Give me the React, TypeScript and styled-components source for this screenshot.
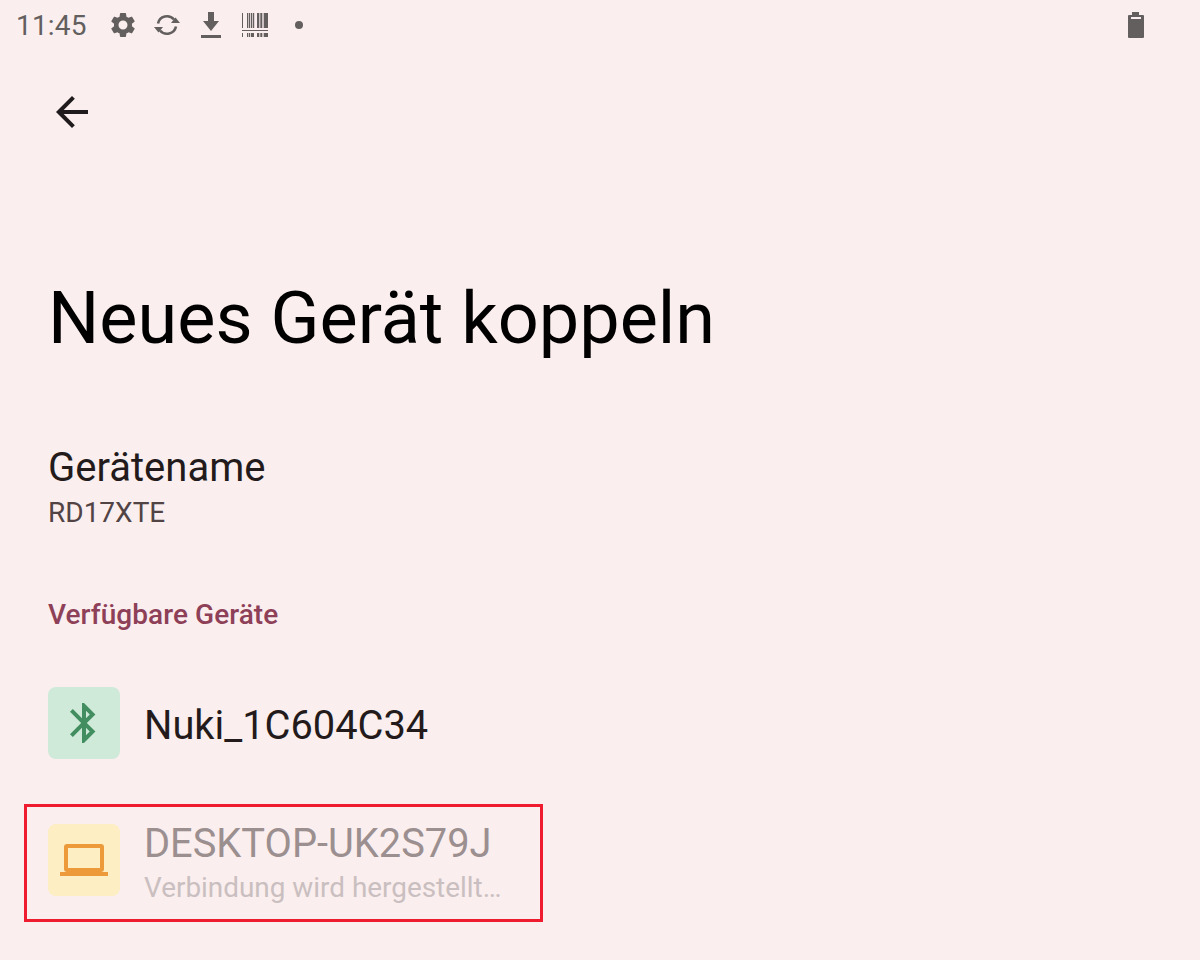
import React from "react";
import styled, { createGlobalStyle } from "styled-components";

const GlobalStyle = createGlobalStyle`
  html, body {
    margin: 0;
    padding: 0;
    background: #faeeee;
  }
  body {
    font-family: Roboto, "Noto Sans", sans-serif;
    overflow: hidden;
  }
`;

const Screen = styled.div`
  position: relative;
  width: 1200px;
  height: 960px;
  background: #faeeee;
  display: flex;
  flex-direction: column;
  overflow: hidden;
`;

const StatusBar = styled.div`
  height: 50px;
  display: flex;
  align-items: center;
  padding: 0 56px 0 16px;
  color: #635f5f;
`;

const Clock = styled.span`
  font-size: 28px;
  letter-spacing: 0.2px;
  width: 85px;
`;

const StatusIcons = styled.div`
  display: flex;
  align-items: center;
  flex: 1;
`;

// every notification icon sits in a slot of the same width
const IconSlot = styled.div`
  width: 44px;
  height: 50px;
  display: flex;
  align-items: center;
  justify-content: center;
`;

const StatusIcon = styled.svg`
  display: block;
  flex: none;
`;

const BackBar = styled.div`
  height: 227px;
  padding: 38px 0 0 48px;
  box-sizing: border-box;
`;

const Title = styled.h1`
  margin: 0;
  padding: 0 48px;
  font-size: 72px;
  line-height: 84px;
  font-weight: 400;
  color: #000;
  height: 96px;
`;

const NameBlock = styled.div`
  padding: 0 48px;
  margin-top: 74px;
`;

const NameLabel = styled.div`
  font-size: 40px;
  line-height: 42px;
  color: #231a1b;
`;

const NameValue = styled.div`
  font-size: 28px;
  line-height: 32px;
  color: #524345;
  margin-top: 8px;
`;

const SectionLabel = styled.div`
  padding: 0 48px;
  margin-top: 70px;
  font-size: 28px;
  letter-spacing: 0.06px;
  line-height: 32px;
  font-weight: 500;
  color: #8d4057;
`;

const DeviceRow = styled.div<{ $top: number }>`
  display: flex;
  align-items: center;
  gap: 24px;
  padding: 0 48px;
  height: 72px;
  margin-top: ${(p) => p.$top}px;
`;

const IconTile = styled.div<{ $bg: string }>`
  width: 72px;
  height: 72px;
  flex: none;
  border-radius: 8px;
  background: ${(p) => p.$bg};
  display: flex;
  align-items: center;
  justify-content: center;
`;

const DeviceText = styled.div`
  display: flex;
  flex-direction: column;
  padding-top: 6px;
`;

const DeviceName = styled.div<{ $muted?: boolean }>`
  font-size: 39.8px;
  line-height: 44px;
  color: ${(p) => (p.$muted ? "#9c8f90" : "#231a1b")};
`;

const DeviceStatus = styled.div`
  font-size: 27.9px;
  line-height: 32px;
  color: #cabfc0;
  margin-top: 6px;
`;

const Highlight = styled.div`
  position: absolute;
  left: 24px;
  top: 804px;
  width: 519px;
  height: 118px;
  box-sizing: border-box;
  border: 3px solid #ee1c2e;
  pointer-events: none;
`;

const Gear = () => (
  <StatusIcon width="30" height="30" viewBox="0 0 24 24" fill="#635f5f">
    <path d="M19.14 12.94c.04-.3.06-.61.06-.94 0-.32-.02-.64-.07-.94l2.03-1.58a.49.49 0 0 0 .12-.61l-1.92-3.32a.49.49 0 0 0-.59-.22l-2.39.96c-.5-.38-1.03-.7-1.62-.94l-.36-2.54a.48.48 0 0 0-.48-.41h-3.84a.48.48 0 0 0-.47.41l-.36 2.54c-.59.24-1.13.57-1.62.94l-2.39-.96a.48.48 0 0 0-.59.22L2.74 8.87a.48.48 0 0 0 .12.61l2.03 1.58c-.05.3-.09.63-.09.94s.02.64.07.94l-2.03 1.58a.49.49 0 0 0-.12.61l1.92 3.32c.12.22.37.29.59.22l2.39-.96c.5.38 1.03.7 1.62.94l.36 2.54c.05.24.24.41.48.41h3.84c.24 0 .44-.17.47-.41l.36-2.54c.59-.24 1.13-.56 1.62-.94l2.39.96c.22.08.47 0 .59-.22l1.92-3.32a.48.48 0 0 0-.12-.61l-2.01-1.58zM12 15.6a3.6 3.6 0 1 1 0-7.2 3.6 3.6 0 0 1 0 7.2z" />
  </StatusIcon>
);

const Sync = () => (
  <StatusIcon width="28" height="26" viewBox="0 0 28 26" fill="none" stroke="#635f5f" strokeWidth="2.6">
    <path d="M5 11.5a9.2 9.2 0 0 1 16-4" />
    <path d="M23 14.5a9.2 9.2 0 0 1-16 4" />
    <path d="M18 11h9l-4.5-5.5z" fill="#635f5f" stroke="none" />
    <path d="M10 15H1l4.5 5.5z" fill="#635f5f" stroke="none" />
  </StatusIcon>
);

const Download = () => (
  <StatusIcon width="20" height="26" viewBox="0 0 20 26" fill="#635f5f">
    <path d="M7 0h6v9h5l-8 10-8-10h5z" />
    <rect x="0" y="23" width="20" height="3" />
  </StatusIcon>
);

const BAR_TOP = [
  [0, 1], [5, 1], [6.7, 1.5], [9, 1], [10.7, 1.5], [15, 2.3], [18.3, 2], [21.7, 4.3],
];
const BAR_BOTTOM = [
  [0, 1], [5, 1], [6.7, 1.5], [9, 3], [15, 2.3], [18.3, 2], [21.7, 4.3],
];

const Barcode = () => (
  <StatusIcon width="26" height="24" viewBox="0 0 26 24" fill="#635f5f">
    {BAR_TOP.map(([x, w]) => (
      <rect key={x} x={x} y="0" width={w} height="15" />
    ))}
    <rect x="0" y="17" width="26" height="1" />
    {BAR_BOTTOM.map(([x, w]) => (
      <rect key={x} x={x} y="20" width={w} height="4" />
    ))}
  </StatusIcon>
);

const Dot = () => (
  <StatusIcon width="8" height="8" viewBox="0 0 8 8" fill="#635f5f">
    <circle cx="4" cy="4" r="4" />
  </StatusIcon>
);

const Battery = () => (
  <StatusIcon width="16" height="26" viewBox="0 0 16 26">
    <path d="M4 0h7v3h4a1 1 0 0 1 1 1v21a1 1 0 0 1-1 1H1a1 1 0 0 1-1-1V4a1 1 0 0 1 1-1h3z" fill="#635f5f" />
    <rect x="3" y="5" width="10" height="2" fill="#faeeee" />
  </StatusIcon>
);

const BackArrow = () => (
  <svg width="48" height="48" viewBox="0 0 24 24" fill="#1f1a1b" style={{ display: "block" }}>
    <path d="M20 11H7.83l5.59-5.59L12 4l-8 8 8 8 1.41-1.41L7.83 13H20v-2z" />
  </svg>
);

const Bluetooth = () => (
  <svg width="48" height="48" viewBox="0 0 24 24" fill="#438e60">
    <path d="M17.71 7.71L12 2h-1v7.59L6.41 5 5 6.41 10.59 12 5 17.59 6.41 19 11 14.41V22h1l5.71-5.71-4.3-4.29 4.3-4.29zM13 5.83l1.88 1.88L13 9.59V5.83zm1.88 10.46L13 18.17v-3.76l1.88 1.88z" />
  </svg>
);

const Laptop = () => (
  <svg width="48" height="48" viewBox="0 0 48 48" fill="#ec9a3a">
    <path
      fillRule="evenodd"
      d="M7 8h34a3 3 0 0 1 3 3v22a3 3 0 0 1-3 3H7a3 3 0 0 1-3-3V11a3 3 0 0 1 3-3zm1 4v20h32V12z"
    />
    <rect x="0" y="36" width="48" height="4" />
  </svg>
);

export default function App() {
  return (
    <>
      <GlobalStyle />
      <Screen>
        <StatusBar>
          <Clock>11:45</Clock>
          <StatusIcons>
            <IconSlot>
              <Gear />
            </IconSlot>
            <IconSlot>
              <Sync />
            </IconSlot>
            <IconSlot>
              <Download />
            </IconSlot>
            <IconSlot>
              <Barcode />
            </IconSlot>
            <IconSlot>
              <Dot />
            </IconSlot>
          </StatusIcons>
          <Battery />
        </StatusBar>
        <BackBar>
          <BackArrow />
        </BackBar>
        <Title>Neues Gerät koppeln</Title>
        <NameBlock>
          <NameLabel>Gerätename</NameLabel>
          <NameValue>RD17XTE</NameValue>
        </NameBlock>
        <SectionLabel>Verfügbare Geräte</SectionLabel>
        <DeviceRow $top={56}>
          <IconTile $bg="#cfead8">
            <Bluetooth />
          </IconTile>
          <DeviceText>
            <DeviceName>Nuki_1C604C34</DeviceName>
          </DeviceText>
        </DeviceRow>
        <DeviceRow $top={65}>
          <IconTile $bg="#fdeec3">
            <Laptop />
          </IconTile>
          <DeviceText>
            <DeviceName $muted>DESKTOP-UK2S79J</DeviceName>
            <DeviceStatus>Verbindung wird hergestellt…</DeviceStatus>
          </DeviceText>
        </DeviceRow>
        <Highlight />
      </Screen>
    </>
  );
}
